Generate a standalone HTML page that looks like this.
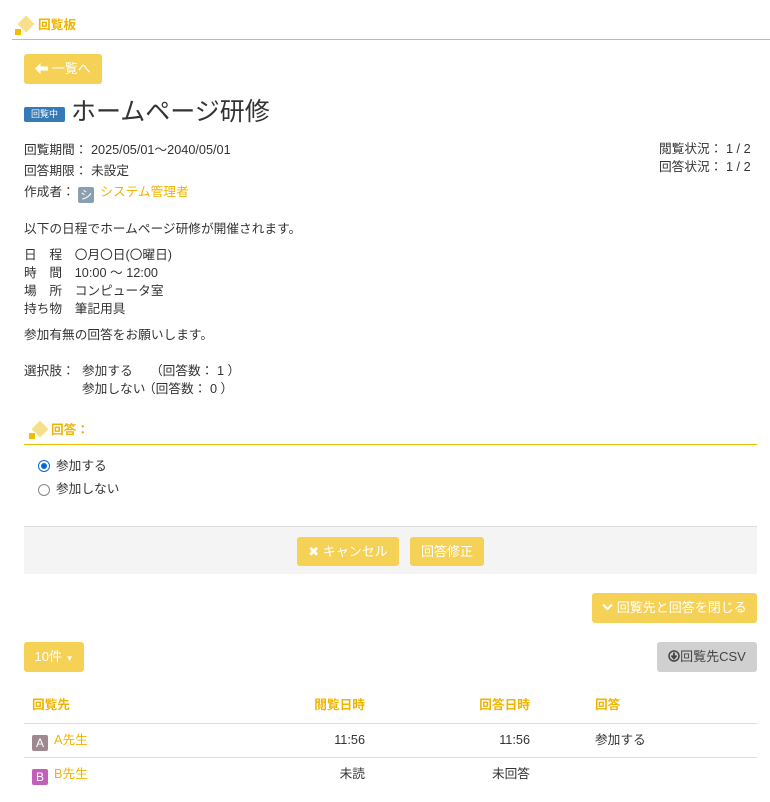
<!DOCTYPE html>
<html><head><meta charset="utf-8"><style>
*{margin:0;padding:0;box-sizing:border-box}
body{width:770px;height:802px;background:#fff;font-family:"Liberation Sans","Noto Sans CJK JP",sans-serif;font-size:12.7px;color:#333;position:relative;overflow:hidden}
.a{position:absolute;white-space:nowrap;line-height:18px}
.g{color:#f0b400}
.btn{position:absolute;background:#f5d155;color:#fff;border-radius:3px;text-align:center;font-size:13px}
.dia{position:absolute;width:12px;height:12px;background:#f8e08a;transform:rotate(45deg)}
.sq{position:absolute;width:6px;height:6px;background:#f0c000}
.r{position:absolute;text-align:right}
.av{display:inline-block;width:16px;height:16px;border-radius:2px;color:#fff;text-align:center;line-height:16px;font-size:12px;vertical-align:-3px;margin-right:6px}
.hl{position:absolute;height:1px;background:#ddd;left:24px;width:733px}
</style></head><body>
<div class="dia" style="left:20px;top:18px"></div><div class="sq" style="left:15px;top:29px"></div>
<div class="a g" style="left:38px;top:16px;font-weight:bold">回覧板</div>
<div style="position:absolute;left:12px;top:39px;width:758px;height:1px;background:#e0c040"></div>
<div class="btn" style="left:24px;top:54px;width:78px;height:30px;line-height:30px"><svg width="13" height="11" viewBox="0 0 13 11" style="vertical-align:-1px"><path d="M0 5.5L5.5 0V3.5H13V7.5H5.5V11Z" fill="#fff"/></svg> 一覧へ</div>
<div class="a" style="left:24px;top:107px;width:41px;height:15px;background:#337ab7;color:#fff;font-size:9px;line-height:15px;text-align:center;border-radius:2px">回覧中</div>
<div class="a" style="left:71px;top:96px;font-size:25px;line-height:32px;color:#333">ホームページ研修</div>
<div class="a" style="left:24px;top:141px">回覧期間： 2025/05/01～2040/05/01</div>
<div class="a" style="left:24px;top:162px">回答期限： 未設定</div>
<div class="a" style="left:24px;top:183px">作成者： <span class="av" style="background:#8aa0b0">シ</span><span class="g">システム管理者</span></div>
<div class="a" style="left:659px;top:140px">閲覧状況： 1 / 2</div>
<div class="a" style="left:659px;top:158px">回答状況： 1 / 2</div>
<div class="a" style="left:24px;top:220px">以下の日程でホームページ研修が開催されます。</div>
<div class="a" style="left:24px;top:246px">日　程　〇月〇日(〇曜日)</div>
<div class="a" style="left:24px;top:264px">時　間　10:00 ～ 12:00</div>
<div class="a" style="left:24px;top:282px">場　所　コンピュータ室</div>
<div class="a" style="left:24px;top:300px">持ち物　筆記用具</div>
<div class="a" style="left:24px;top:326px">参加有無の回答をお願いします。</div>
<div class="a" style="left:24px;top:362px">選択肢：</div>
<div class="a" style="left:82px;top:362px">参加する</div>
<div class="a" style="left:150px;top:362px">（回答数： 1 ）</div>
<div class="a" style="left:82px;top:380px">参加しない</div>
<div class="a" style="left:143px;top:380px">（回答数： 0 ）</div>
<div class="dia" style="left:34px;top:423px"></div><div class="sq" style="left:29px;top:433px"></div>
<div class="a g" style="left:51px;top:421px;font-weight:bold">回答：</div>
<div style="position:absolute;left:24px;top:444px;width:733px;height:1px;background:#e8c000"></div>
<div class="a" style="left:38px;top:460px;width:12px;height:12px;border-radius:50%;border:1px solid #0a66d8"><div style="margin:2px;width:6px;height:6px;border-radius:50%;background:#0a66d8"></div></div>
<div class="a" style="left:56px;top:457px">参加する</div>
<div class="a" style="left:38px;top:484px;width:12px;height:12px;border-radius:50%;border:1px solid #888"></div>
<div class="a" style="left:56px;top:480px">参加しない</div>
<div style="position:absolute;left:24px;top:526px;width:733px;height:48px;background:#f4f4f4;border-top:1px solid #ddd"></div>
<div class="btn" style="left:297px;top:537px;width:102px;height:29px;line-height:29px">✖ キャンセル</div>
<div class="btn" style="left:410px;top:537px;width:74px;height:29px;line-height:29px">回答修正</div>
<div class="btn" style="left:592px;top:593px;width:165px;height:30px;line-height:30px"><svg width="11" height="8" viewBox="0 0 11 8" style="vertical-align:1px"><path d="M1 1.5L5.5 6L10 1.5" stroke="#fff" stroke-width="2.2" fill="none"/></svg> 回覧先と回答を閉じる</div>
<div class="btn" style="left:24px;top:642px;width:60px;height:30px;line-height:30px">10件 <span style="font-size:8px">▼</span></div>
<div class="btn" style="left:657px;top:642px;width:100px;height:30px;line-height:30px;background:#d0d0d0;color:#444"><svg width="12" height="12" viewBox="0 0 12 12" style="vertical-align:-1px"><circle cx="6" cy="6" r="5" stroke="#444" stroke-width="1.5" fill="none"/><path d="M6 2.5V7M3.5 5.5L6 8.5L8.5 5.5" stroke="#444" stroke-width="1.8" fill="none"/></svg>回覧先CSV</div>
<div class="a g" style="left:32px;top:696px;font-weight:bold">回覧先</div>
<div class="r a g" style="left:265px;width:100px;top:696px;font-weight:bold">閲覧日時</div>
<div class="r a g" style="left:430px;width:100px;top:696px;font-weight:bold">回答日時</div>
<div class="a g" style="left:595px;top:696px;font-weight:bold">回答</div>
<div class="hl" style="top:723px"></div>
<div class="a" style="left:32px;top:731px"><span class="av" style="background:#a08890">A</span><span class="g">A先生</span></div>
<div class="r a" style="left:265px;width:100px;top:731px">11:56</div>
<div class="r a" style="left:430px;width:100px;top:731px">11:56</div>
<div class="a" style="left:595px;top:731px">参加する</div>
<div class="hl" style="top:757px"></div>
<div class="a" style="left:32px;top:765px"><span class="av" style="background:#c060b8">B</span><span class="g">B先生</span></div>
<div class="r a" style="left:265px;width:100px;top:765px">未読</div>
<div class="r a" style="left:430px;width:100px;top:765px">未回答</div>
</body></html>
